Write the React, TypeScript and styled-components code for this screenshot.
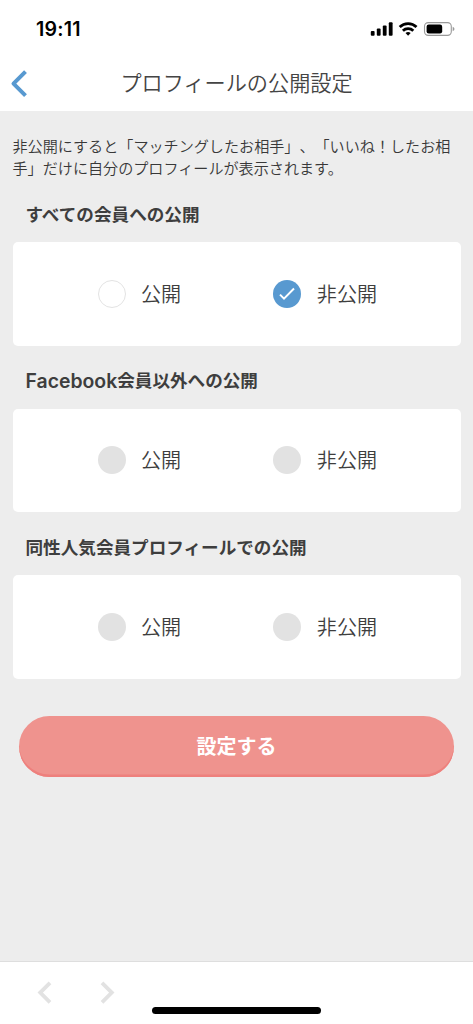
import React, { useState } from "react";
import styled, { createGlobalStyle } from "styled-components";

const GlobalStyle = createGlobalStyle`
  * { box-sizing: border-box; }
  body {
    margin: 0;
    background: #ededed;
    color: #3e3e3e;
    font-family: Inter, "Noto Sans CJK JP", sans-serif;
    text-spacing-trim: space-all;
  }
`;

const Screen = styled.div`
  display: flex;
  flex-direction: column;
  height: 1024px;
  background: #ededed;
`;

const StatusBar = styled.div`
  display: flex;
  flex: none;
  justify-content: space-between;
  align-items: center;
  height: 57px;
  padding: 0 18px 0 36px;
  background: #fff;
`;

const Clock = styled.span`
  padding-top: 1px;
  font-size: 19.6px;
  font-weight: 600;
  letter-spacing: 0.2px;
  color: #000;
`;

const StatusIcons = styled.svg`
  display: block;
  width: 86px;
  height: 16px;
`;

const Header = styled.header`
  display: grid;
  flex: none;
  grid-template-columns: 30px 1fr 30px;
  align-items: center;
  height: 54px;
  background: #fff;
`;

const BackButton = styled.button`
  padding: 0 0 0 10px;
  border: 0;
  background: none;
  color: #5899d0;

  svg { display: block; }
`;

const Title = styled.h1`
  margin: 0;
  text-align: center;
  font-size: 21.15px;
  font-weight: 350;
  line-height: 30px;
  color: #444;
`;

const Content = styled.main`
  flex: 1;
  padding: 25px 12.5px 0;
`;

const Intro = styled.p`
  margin: 0;
  font-size: 15.1px;
  font-weight: 350;
  line-height: 21.7px;
  color: #383838;
`;

const Group = styled.section`
  height: 166.4px;
`;

const GroupTitle = styled.h2`
  display: flex;
  align-items: center;
  height: 62.8px;
  margin: 0;
  padding: 8px 13px 0;
  font-size: 17.6px;
  font-weight: 600;
  line-height: 26px;
`;

const Latin = styled.span`
  font-size: 19.4px;
  line-height: 26px;
`;

const Card = styled.div`
  display: grid;
  grid-template-columns: 175.8px 1fr;
  align-items: center;
  height: 103.6px;
  padding-left: 85px;
  border-radius: 5px;
  background: #fff;
`;

const Option = styled.button`
  display: flex;
  align-items: center;
  gap: 15.5px;
  padding: 0;
  border: 0;
  background: none;
  color: inherit;
  font: 350 20.1px/28px Inter, "Noto Sans CJK JP", sans-serif;
`;

const OptionText = styled.span`
  padding-top: 2px;
`;

const Radio = styled.span<{ $checked: boolean; $disabled: boolean }>`
  display: flex;
  align-items: center;
  justify-content: center;
  width: 28px;
  height: 28px;
  border: ${(p) => (p.$checked || p.$disabled ? "0" : "1.5px solid #e3e3e3")};
  border-radius: 50%;
  background: ${(p) => (p.$disabled ? "#e2e2e2" : p.$checked ? "#5899d0" : "#fff")};
`;

const SubmitButton = styled.button`
  display: block;
  width: 435px;
  height: 60.5px;
  margin: 37.6px auto 0;
  padding: 2px 0 0;
  border: 0;
  border-radius: 31px;
  background: #ef938e;
  box-shadow: inset 0 -2.5px 0 #ee807d;
  color: #fff;
  font: 700 20px/58px Inter, "Noto Sans CJK JP", sans-serif;
`;

const BottomBar = styled.footer`
  display: flex;
  flex: none;
  flex-direction: column;
  justify-content: space-between;
  height: 63px;
  padding: 19px 0 10px;
  border-top: 1px solid #dedede;
  background: #fff;
`;

const HistoryNav = styled.nav`
  display: flex;
  gap: 48px;
  padding-left: 37px;
  color: #e2e2e2;

  svg { display: block; }
`;

const HomeIndicator = styled.div`
  width: 169px;
  height: 7px;
  margin: 0 auto;
  border-radius: 4px;
  background: #000;
`;

const groups = [
  { latin: "", title: "すべての会員への公開", disabled: false },
  { latin: "Facebook", title: "会員以外への公開", disabled: true },
  { latin: "", title: "同性人気会員プロフィールでの公開", disabled: true },
];
const choices = ["公開", "非公開"];

export default function App() {
  const [selected, setSelected] = useState("非公開");

  return (
    <Screen>
      <GlobalStyle />
      <StatusBar>
        <Clock>19:11</Clock>
        <StatusIcons viewBox="0 0 86 16">
          <rect x="1.8" y="10" width="3.8" height="4.7" rx="1" />
          <rect x="7.8" y="7.4" width="3.8" height="7.3" rx="1" />
          <rect x="13.8" y="4.6" width="3.8" height="10.1" rx="1" />
          <rect x="19.8" y="1.2" width="3.8" height="13.5" rx="1" />
          <g fill="none" stroke="#000" strokeWidth="2.8">
            <path d="M30.7 6.1a12 12 0 0 1 16.8 0" />
            <path d="M33.9 9.7a7.5 7.5 0 0 1 10.4 0" />
          </g>
          <path d="M39.1 14.8l-2.6-2.7a3.9 3.9 0 0 1 5.2 0z" />
          <rect x="55.5" y="1.6" width="26.8" height="12.8" rx="3.8" fill="none" stroke="#999" strokeWidth="1.1" />
          <rect x="57.6" y="3.6" width="15.6" height="8.9" rx="2.2" />
          <path d="M83.7 5.7q1.8.7 1.8 2.3t-1.8 2.3z" fill="#999" />
        </StatusIcons>
      </StatusBar>
      <Header>
        <BackButton aria-label="戻る">
          <svg width="18" height="28" viewBox="0 0 18 28" fill="none" stroke="currentColor" strokeWidth="4" strokeLinejoin="round">
            <path d="M15.5 1.7L3.5 13.7l12 12" />
          </svg>
        </BackButton>
        <Title>プロフィールの公開設定</Title>
      </Header>
      <Content>
        <Intro>
          非公開にすると「マッチングしたお相手」、「いいね！したお相手」だけに自分のプロフィールが表示されます。
        </Intro>
        {groups.map(({ latin, title, disabled }) => (
          <Group key={title}>
            <GroupTitle>
              {latin && <Latin>{latin}</Latin>}
              {title}
            </GroupTitle>
            <Card>
              {choices.map((choice) => {
                const checked = !disabled && selected === choice;
                return (
                  <Option key={choice} disabled={disabled} onClick={() => setSelected(choice)}>
                    <Radio $checked={checked} $disabled={disabled}>
                      {checked && (
                        <svg width="16" height="14" viewBox="0 0 16 14" fill="none" stroke="#fff" strokeWidth="2">
                          <path d="M1 7.6l4 4L15 1.5" />
                        </svg>
                      )}
                    </Radio>
                    <OptionText>{choice}</OptionText>
                  </Option>
                );
              })}
            </Card>
          </Group>
        ))}
        <SubmitButton>設定する</SubmitButton>
      </Content>
      <BottomBar>
        <HistoryNav>
          <svg width="15" height="24" viewBox="0 0 15 24" fill="none" stroke="currentColor" strokeWidth="3.8">
            <path d="M13 1.8L3.2 11.6l9.8 9.8" />
          </svg>
          <svg width="15" height="24" viewBox="0 0 15 24" fill="none" stroke="currentColor" strokeWidth="3.8">
            <path d="M2 1.8l9.8 9.8L2 21.4" />
          </svg>
        </HistoryNav>
        <HomeIndicator />
      </BottomBar>
    </Screen>
  );
}
